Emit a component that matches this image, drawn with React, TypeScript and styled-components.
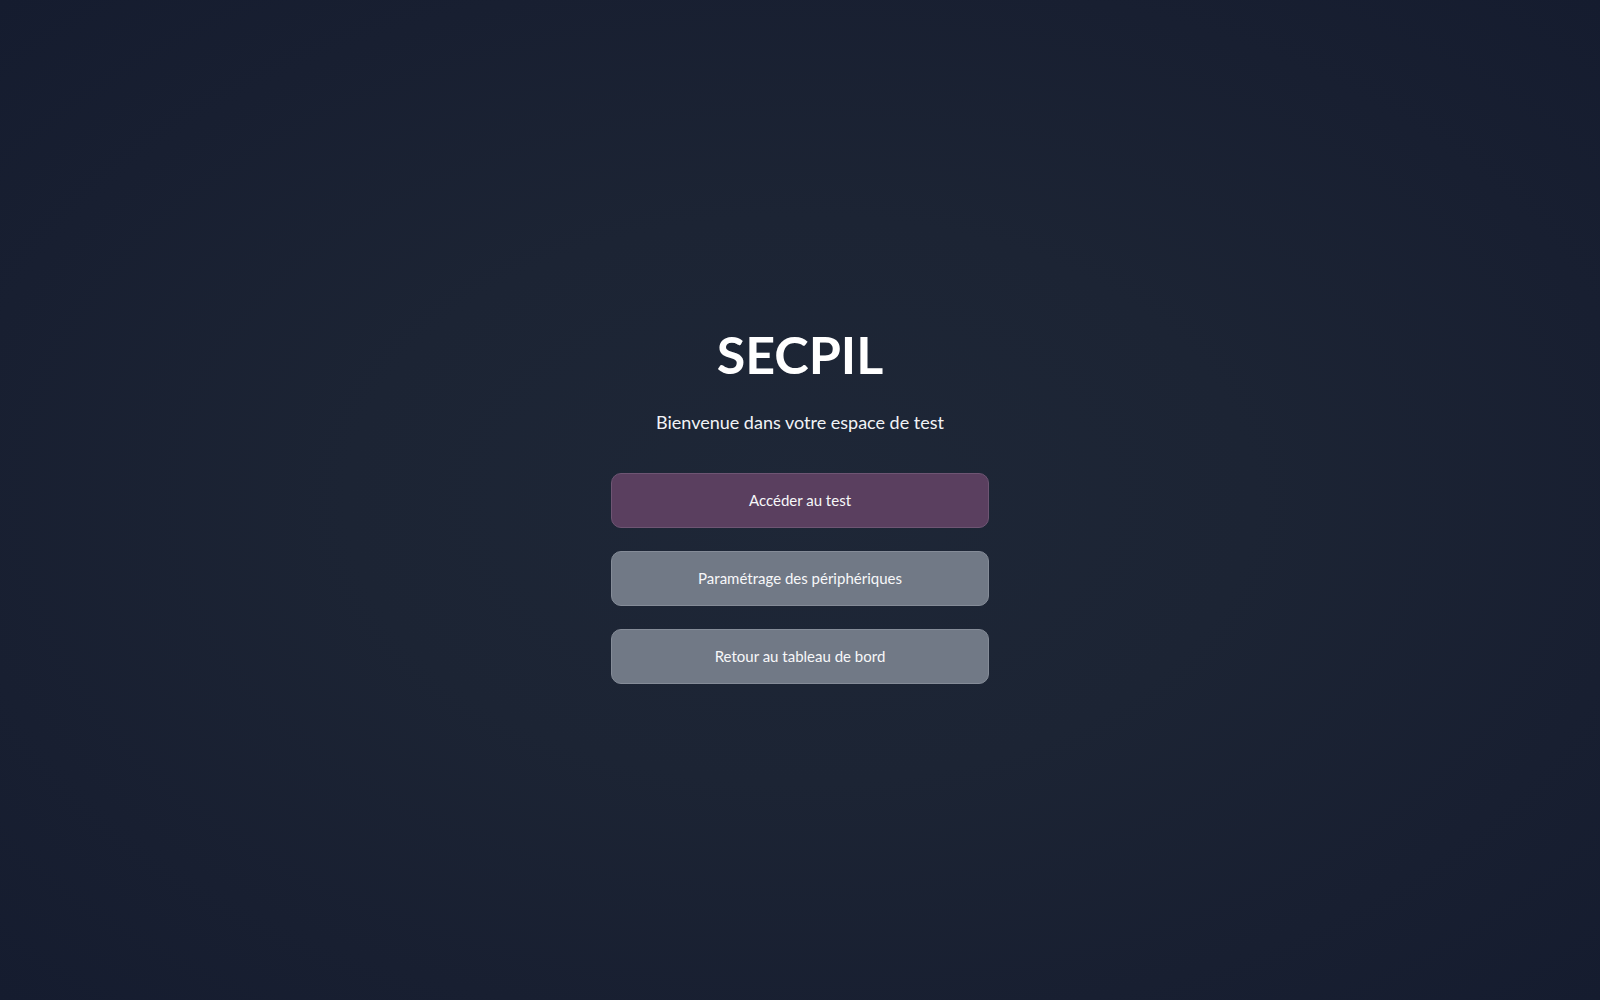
import React from "react";
import styled, { createGlobalStyle } from "styled-components";

const Global = createGlobalStyle`
  html, body { margin: 0; padding: 0; height: 100%; }
  body {
    font-family: Lato, "Noto Sans", "Open Sans", sans-serif;
    background: #161e30;
  }
  #root { min-height: 100vh; }
`;

const Page = styled.main`
  min-height: 100vh;
  display: flex;
  align-items: center;
  justify-content: center;
  background: radial-gradient(ellipse at center, #1e2737 0%, #1c2434 40%, #181f31 75%, #151c2f 100%);
`;

const Panel = styled.section`
  width: 378px;
  display: flex;
  flex-direction: column;
  align-items: stretch;
  margin-top: 6px;
`;

const Title = styled.h1`
  margin: 0;
  text-align: center;
  color: #ffffff;
  font-size: 52px;
  font-weight: 700;
  line-height: 62px;
`;

const Subtitle = styled.p`
  margin: 25px 0 0;
  text-align: center;
  color: #f2f3f6;
  font-size: 18px;
  line-height: 24px;
`;

const Actions = styled.nav`
  margin-top: 39px;
  display: flex;
  flex-direction: column;
  gap: 23px;
`;

const Button = styled.button<{ $variant: "primary" | "secondary" }>`
  height: 55px;
  border-radius: 10px;
  font-family: inherit;
  font-size: 15px;
  color: #f7f7f9;
  cursor: pointer;
  background: ${(p) => (p.$variant === "primary" ? "#5a3f5f" : "#717986")};
  border: 1px solid ${(p) => (p.$variant === "primary" ? "#6e5573" : "#858c98")};
`;

export default function App() {
  return (
    <>
      <Global />
      <Page>
        <Panel>
          <Title>SECPIL</Title>
          <Subtitle>Bienvenue dans votre espace de test</Subtitle>
          <Actions>
            <Button $variant="primary">Accéder au test</Button>
            <Button $variant="secondary">Paramétrage des périphériques</Button>
            <Button $variant="secondary">Retour au tableau de bord</Button>
          </Actions>
        </Panel>
      </Page>
    </>
  );
}
